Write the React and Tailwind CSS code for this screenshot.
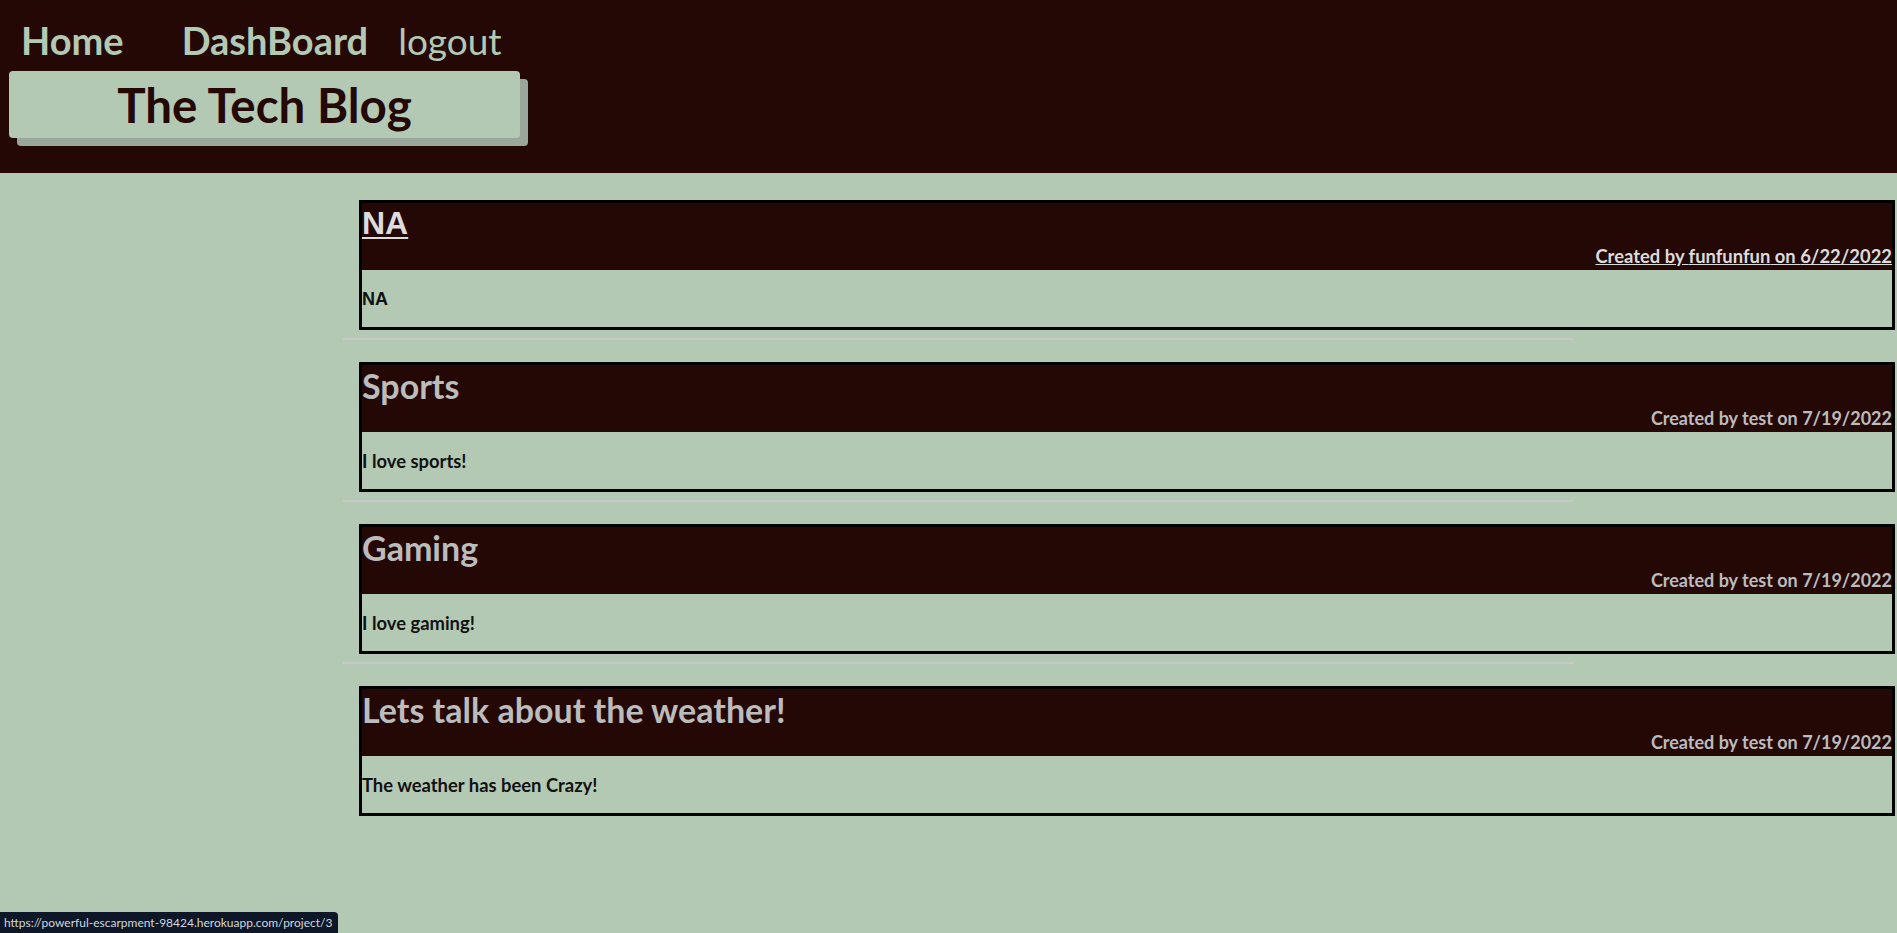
const posts = [
  {
    id: 1,
    title: "NA",
    author: "funfunfun",
    date: "6/22/2022",
    body: "NA",
    hovered: true,
  },
  { id: 2, title: "Sports", author: "test", date: "7/19/2022", body: "I love sports!" },
  { id: 3, title: "Gaming", author: "test", date: "7/19/2022", body: "I love gaming!" },
  {
    id: 4,
    title: "Lets talk about the weather!",
    author: "test",
    date: "7/19/2022",
    body: "The weather has been Crazy!",
  },
];

function PostCard({ post, last }) {
  const hovered = post.hovered;
  return (
    <div className="w-[1230px]">
      <div className="ml-[16px] w-[1536px] border-[3px] border-black">
        <div className="h-[67px] bg-[#230806] flex flex-col">
          <h2
            className={
              hovered
                ? "text-[32px] leading-[40px] font-bold text-[#dcdcdc] underline decoration-2 underline-offset-[3px] font-['Liberation_Sans',Arial,sans-serif]"
                : "text-[34px] leading-[41px] font-bold text-[#bcbcbc]"
            }
          >
            {post.title}
          </h2>
          <p
            className={
              hovered
                ? "mt-auto mb-[2px] text-right text-[18.4px] leading-[24px] font-bold text-[#dcdcdc] underline"
                : "mt-auto mb-[2px] text-right text-[18px] leading-[24px] font-bold text-[#bcbcbc]"
            }
          >
            Created by {post.author} on {post.date}
          </p>
        </div>
        <div className="h-[57px] pt-[17px]">
          <p
            className={
              hovered
                ? "text-[18px] leading-[24px] font-bold text-[#111] font-['Liberation_Sans',Arial,sans-serif]"
                : "text-[18.4px] leading-[24px] font-bold text-[#111]"
            }
          >
            {post.body}
          </p>
        </div>
      </div>
      {!last && <div className="mt-[8px] mb-[22px] border-t-2 border-[#c9c9c9]" />}
    </div>
  );
}

export default function App() {
  return (
    <div className="min-h-[933px] bg-[#b3c9b4] font-['Lato','Liberation_Sans',sans-serif] overflow-hidden relative">
      <header className="h-[173px] bg-[#230806] pt-[14px]">
        <nav className="flex items-baseline h-[52px] text-[38px] leading-[52px] text-[#b3c9b4]">
          <a href="#" className="ml-[21px] font-bold">
            Home
          </a>
          <a href="#" className="ml-[58px] font-bold">
            DashBoard
          </a>
          <a href="#" className="ml-[30px] font-normal text-[37px]">
            logout
          </a>
        </nav>
        <div className="ml-[9px] mt-[5px] w-[511px] h-[67px] rounded-[4px] bg-[#b3c9b4] shadow-[8px_8px_0_#9aa89b] flex items-center justify-center">
          <h1 className="text-[47.5px] leading-[52px] font-bold text-[#230806]">The Tech Blog</h1>
        </div>
      </header>

      <main className="pt-[27px] pl-[343px]">
        {posts.map((post, i) => (
          <PostCard key={post.id} post={post} last={i === posts.length - 1} />
        ))}
      </main>

      <div className="absolute left-0 bottom-0 h-[21px] pl-[4px] pr-[6px] rounded-tr-[4px] bg-[#0d1727] text-[12px] leading-[21px] text-[#d3d7dc]">
        https://powerful-escarpment-98424.herokuapp.com/project/3
      </div>
    </div>
  );
}
